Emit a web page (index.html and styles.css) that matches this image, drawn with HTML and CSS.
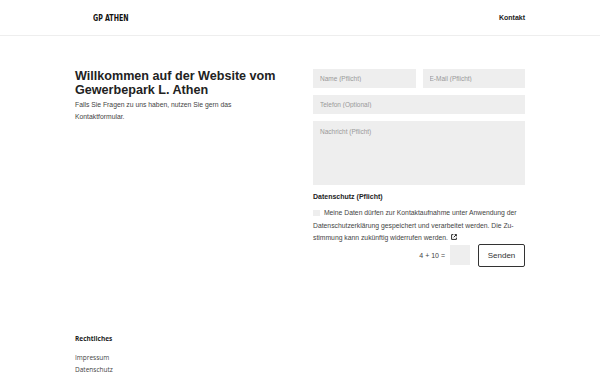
FILE: index.html
```html
<!DOCTYPE html>
<html lang="de">
<head>
    <meta charset="UTF-8">
    <meta name="viewport" content="width=device-width, initial-scale=1.0">
    <title>GP Athen</title>
    <link rel="stylesheet" href="styles.css">
</head>
<body>
    <header class="site-header">
        <div class="container header-inner">
            <a class="logo" href="#">GP ATHEN</a>
            <a class="nav-link" href="#">Kontakt</a>
        </div>
    </header>

    <main class="container content">
        <div class="intro">
            <h1>Willkommen auf der Website vom Gewerbepark L. Athen</h1>
            <p>Falls Sie Fragen zu uns haben, nutzen Sie gern das Kontaktformular.</p>
        </div>

        <!-- Kontaktformular -->
        <form class="contact-form">
            <div class="row">
                <input type="text" placeholder="Name (Pflicht)">
                <input type="email" placeholder="E-Mail (Pflicht)">
            </div>
            <input type="text" placeholder="Telefon (Optional)">
            <textarea placeholder="Nachricht (Pflicht)"></textarea>

            <h4>Datenschutz (Pflicht)</h4>
            <p class="consent">
                <span class="check"></span>
                Meine Daten dürfen zur Kontaktaufnahme unter Anwendung der Datenschutzerklärung gespeichert und verarbeitet werden. Die Zu&shy;stimmung kann zukünftig widerrufen werden.
                <svg class="ext" width="6" height="6" viewBox="0 0 10 10"><path d="M4 1H1v8h8V6" fill="none" stroke="#222" stroke-width="1.6"/><path d="M6 1h3v3M9 1L4.5 5.5" fill="none" stroke="#222" stroke-width="1.6"/></svg>
            </p>

            <div class="submit-row">
                <span class="captcha">4 + 10 =</span>
                <span class="captcha-box"></span>
                <button type="button">Senden</button>
            </div>
        </form>
    </main>

    <footer class="container footer">
        <h4>Rechtliches</h4>
        <a href="#">Impressum</a>
        <a href="#">Datenschutz</a>
    </footer>
</body>
</html>
```

FILE: styles.css
```css
body {
    font-family: "Liberation Sans", Arial, sans-serif;
    margin: 0;
    background: #fff;
    color: #333;
}
a {
    text-decoration: none;
    color: inherit;
}
.container {
    width: 450px;
    margin: 0 auto;
}
.site-header {
    height: 35px;
    border-bottom: 1px solid #eee;
}
.header-inner {
    display: flex;
    justify-content: space-between;
    align-items: center;
    height: 35px;
}
.logo {
    font-family: "DejaVu Sans Condensed", "Liberation Sans Narrow", sans-serif;
    font-weight: bold;
    font-size: 9px;
    color: #111;
    margin-left: 18px;
    display: inline-block;
    transform: scaleX(0.78);
    transform-origin: left center;
}
.nav-link {
    font-size: 7px;
    color: #222;
    font-weight: bold;
}
.content {
    display: grid;
    grid-template-columns: 1fr 212px;
    gap: 13px;
    padding-top: 33px;
}
h1 {
    font-size: 12.6px;
    line-height: 14px;
    margin: 0;
    color: #222;
}
.intro p {
    font-size: 6.8px;
    line-height: 12px;
    margin: 2px 0 0;
    color: #444;
    max-width: 170px;
}
.contact-form {
    display: flex;
    flex-direction: column;
    gap: 7px;
}
.row {
    display: flex;
    gap: 7px;
}
.row input {
    flex: 1;
    min-width: 0;
}
input, textarea {
    font-family: inherit;
    font-size: 6.5px;
    background: #eee;
    border: none;
    padding: 0 7px;
    height: 19px;
    box-sizing: border-box;
    color: #333;
}
input::placeholder, textarea::placeholder {
    color: #999;
}
textarea {
    height: 64px;
    padding-top: 7px;
    resize: none;
}
.contact-form h4 {
    font-size: 7px;
    margin: 1px 0 0;
    color: #222;
}
.consent {
    font-size: 6.8px;
    line-height: 12.5px;
    color: #444;
    margin: 0;
}
.check {
    display: inline-block;
    width: 7px;
    height: 6px;
    background: #eee;
    margin-right: 2px;
    vertical-align: -1px;
}
.ext {
    vertical-align: 0;
    margin-left: 1px;
}
.submit-row {
    display: flex;
    justify-content: flex-end;
    align-items: center;
    margin-top: -8px;
}
.captcha {
    font-size: 7px;
    color: #444;
    margin-right: 5px;
}
.captcha-box {
    width: 20px;
    height: 20px;
    background: #eee;
    margin-right: 8px;
}
button {
    font-family: inherit;
    font-size: 8px;
    width: 47px;
    height: 23px;
    background: #fff;
    border: 1px solid #333;
    border-radius: 2px;
    color: #333;
    cursor: pointer;
}
.footer {
    padding-top: 67px;
    display: flex;
    flex-direction: column;
}
.footer h4 {
    font-family: "Open Sans", sans-serif;
    font-size: 6.5px;
    margin: 0 0 9px;
    color: #222;
}
.footer a {
    font-family: "Open Sans", sans-serif;
    font-size: 6.5px;
    line-height: 12px;
    color: #444;
}
```
